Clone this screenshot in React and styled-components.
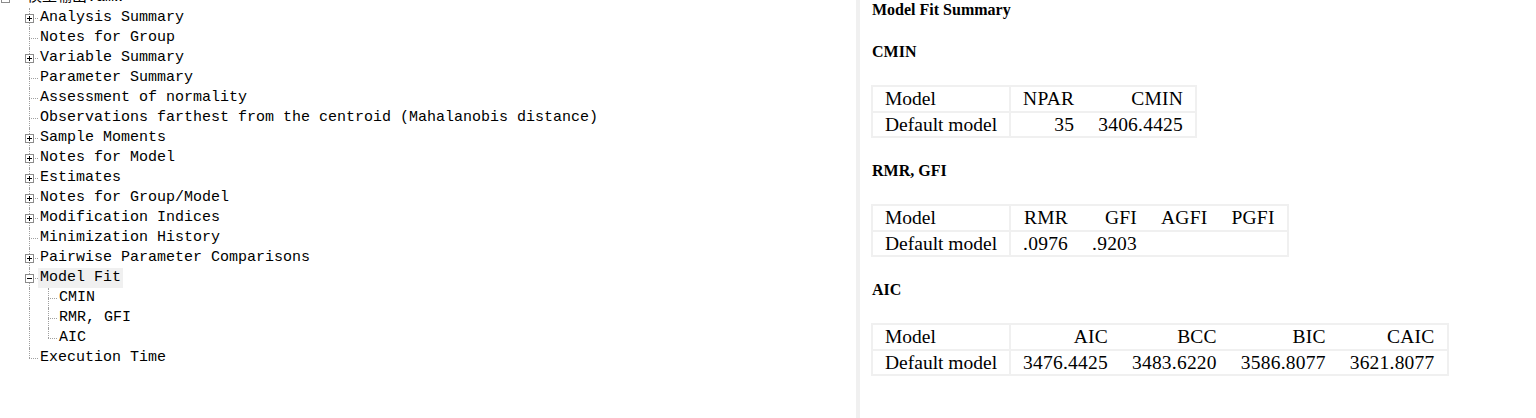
import React from 'react';
import styled, { createGlobalStyle } from 'styled-components';

const GlobalStyle = createGlobalStyle`
    html, body {
        margin: 0;
        padding: 0;
        background: #ffffff;
    }
`;

const Page = styled.div`
    display: flex;
    height: 100vh;
    overflow: hidden;
    background: #ffffff;
`;

// ---- output tree ----

const TreePane = styled.div`
    width: 856px;
    flex-shrink: 0;
    overflow: hidden;
`;

const Tree = styled.ul`
    list-style: none;
    margin: -12px 0 0 0;
    padding: 0;
    font-family: "Liberation Mono", "Noto Sans CJK SC", monospace;
    font-size: 15px;
    color: #000000;
`;

const Row = styled.li`
    display: flex;
    align-items: center;
    height: 20px;
`;

const Spacer = styled.span`
    width: ${({ width }) => width}px;
    flex-shrink: 0;
`;

const Guide = styled.span`
    position: relative;
    width: ${({ $width = 19 }) => $width}px;
    height: 20px;
    flex-shrink: 0;

    &::before {
        content: '';
        display: ${({ $vline }) => $vline ? 'block' : 'none'};
        position: absolute;
        left: ${({ $at = 10 }) => $at}px;
        top: 0;
        height: ${({ $vline }) => $vline === 'top' ? '10px' : '20px'};
        border-left: 1px dotted #a0a0a0;
    }

    &::after {
        content: '';
        display: ${({ $hline }) => $hline ? 'block' : 'none'};
        position: absolute;
        left: ${({ $at = 10 }) => $at}px;
        right: 0;
        top: 10px;
        border-top: 1px dotted #a0a0a0;
    }
`;

const ExpandBox = styled.span`
    position: absolute;
    left: ${({ $at = 10 }) => $at - 4}px;
    top: 6px;
    width: 7px;
    height: 7px;
    border: 1px solid #8c8c8c;
    background: #ffffff;
    z-index: 1;

    &::before {
        content: '';
        position: absolute;
        left: 1px;
        top: 3px;
        width: 5px;
        height: 1px;
        background: #000000;
    }

    &::after {
        content: '';
        display: ${({ open }) => open ? 'none' : 'block'};
        position: absolute;
        left: 3px;
        top: 1px;
        width: 1px;
        height: 5px;
        background: #000000;
    }
`;

const Label = styled.span`
    padding: 0 2px;
    line-height: 20px;
    white-space: pre;
    background: ${({ selected }) => selected ? '#f0f0f0' : 'transparent'};
`;

const items = [
    { label: 'Analysis Summary', folder: true },
    { label: 'Notes for Group' },
    { label: 'Variable Summary', folder: true },
    { label: 'Parameter Summary' },
    { label: 'Assessment of normality' },
    { label: 'Observations farthest from the centroid (Mahalanobis distance)' },
    { label: 'Sample Moments', folder: true },
    { label: 'Notes for Model', folder: true },
    { label: 'Estimates', folder: true },
    { label: 'Notes for Group/Model', folder: true },
    { label: 'Modification Indices', folder: true },
    { label: 'Minimization History' },
    { label: 'Pairwise Parameter Comparisons', folder: true },
    { label: 'Model Fit', folder: true, open: true, selected: true, children: ['CMIN', 'RMR, GFI', 'AIC'] },
    { label: 'Execution Time' },
];

const OutputTree = () => (
    <TreePane>
        <Tree>
            <Row>
                <Guide $width={25} $at={5}>
                    <ExpandBox $at={5} open />
                </Guide>
                <Label>模型输出.amw</Label>
            </Row>

            {items.map((item, i) => {
                const last = i === items.length - 1;
                return (
                    <React.Fragment key={item.label}>
                        <Row>
                            <Spacer width={19} />
                            <Guide $vline={last ? 'top' : 'full'} $hline>
                                {item.folder && <ExpandBox open={item.open} />}
                            </Guide>
                            <Label selected={item.selected}>{item.label}</Label>
                        </Row>

                        {item.open && item.children.map((child, j) => (
                            <Row key={child}>
                                <Spacer width={19} />
                                <Guide $vline={last ? null : 'full'} />
                                <Guide $vline={j === item.children.length - 1 ? 'top' : 'full'} $hline />
                                <Label>{child}</Label>
                            </Row>
                        ))}
                    </React.Fragment>
                );
            })}
        </Tree>
    </TreePane>
);

// ---- html output ----

const Divider = styled.div`
    width: 4px;
    flex-shrink: 0;
    background: #f0f0f0;
`;

const Report = styled.div`
    flex: 1;
    padding: 1px 0 0 11px;
    font-family: "Liberation Serif", "Times New Roman", serif;
    color: #000000;
`;

const Heading = styled.h4`
    margin: 0 0 24px 1px;
    font-size: 16px;
    line-height: 18px;
    font-weight: bold;
`;

const Table = styled.table`
    border-collapse: separate;
    border-spacing: 0;
    border: 2px solid #f0f0f0;
    margin-bottom: 24px;
    font-size: 19.5px;
`;

const Cell = styled.td`
    padding: 0 12px;
    letter-spacing: ${({ first }) => first ? 0 : 0.22}px;
    white-space: nowrap;
    text-align: ${({ first }) => first ? 'left' : 'right'};
    line-height: ${({ head }) => head ? 24 : 23}px;
    border-right: ${({ first }) => first ? '2px solid #f0f0f0' : 'none'};
    border-bottom: ${({ head }) => head ? '2px solid #f0f0f0' : 'none'};
`;

const FitTable = ({ columns, values }) => (
    <Table>
        <tbody>
            <tr>
                <Cell head first>Model</Cell>
                {columns.map((col) => <Cell head key={col}>{col}</Cell>)}
            </tr>
            <tr>
                <Cell first>Default model</Cell>
                {columns.map((col, i) => <Cell key={col}>{values[i] || ''}</Cell>)}
            </tr>
        </tbody>
    </Table>
);

const sections = [
    { title: 'CMIN', columns: ['NPAR', 'CMIN'], values: ['35', '3406.4425'] },
    { title: 'RMR, GFI', columns: ['RMR', 'GFI', 'AGFI', 'PGFI'], values: ['.0976', '.9203'] },
    { title: 'AIC', columns: ['AIC', 'BCC', 'BIC', 'CAIC'], values: ['3476.4425', '3483.6220', '3586.8077', '3621.8077'] },
];

const ModelFitReport = () => (
    <Report>
        <Heading>Model Fit Summary</Heading>
        {sections.map((s) => (
            <section key={s.title}>
                <Heading>{s.title}</Heading>
                <FitTable columns={s.columns} values={s.values} />
            </section>
        ))}
    </Report>
);

const App = () => (
    <Page>
        <GlobalStyle />
        <OutputTree />
        <Divider />
        <ModelFitReport />
    </Page>
);

export default App;
